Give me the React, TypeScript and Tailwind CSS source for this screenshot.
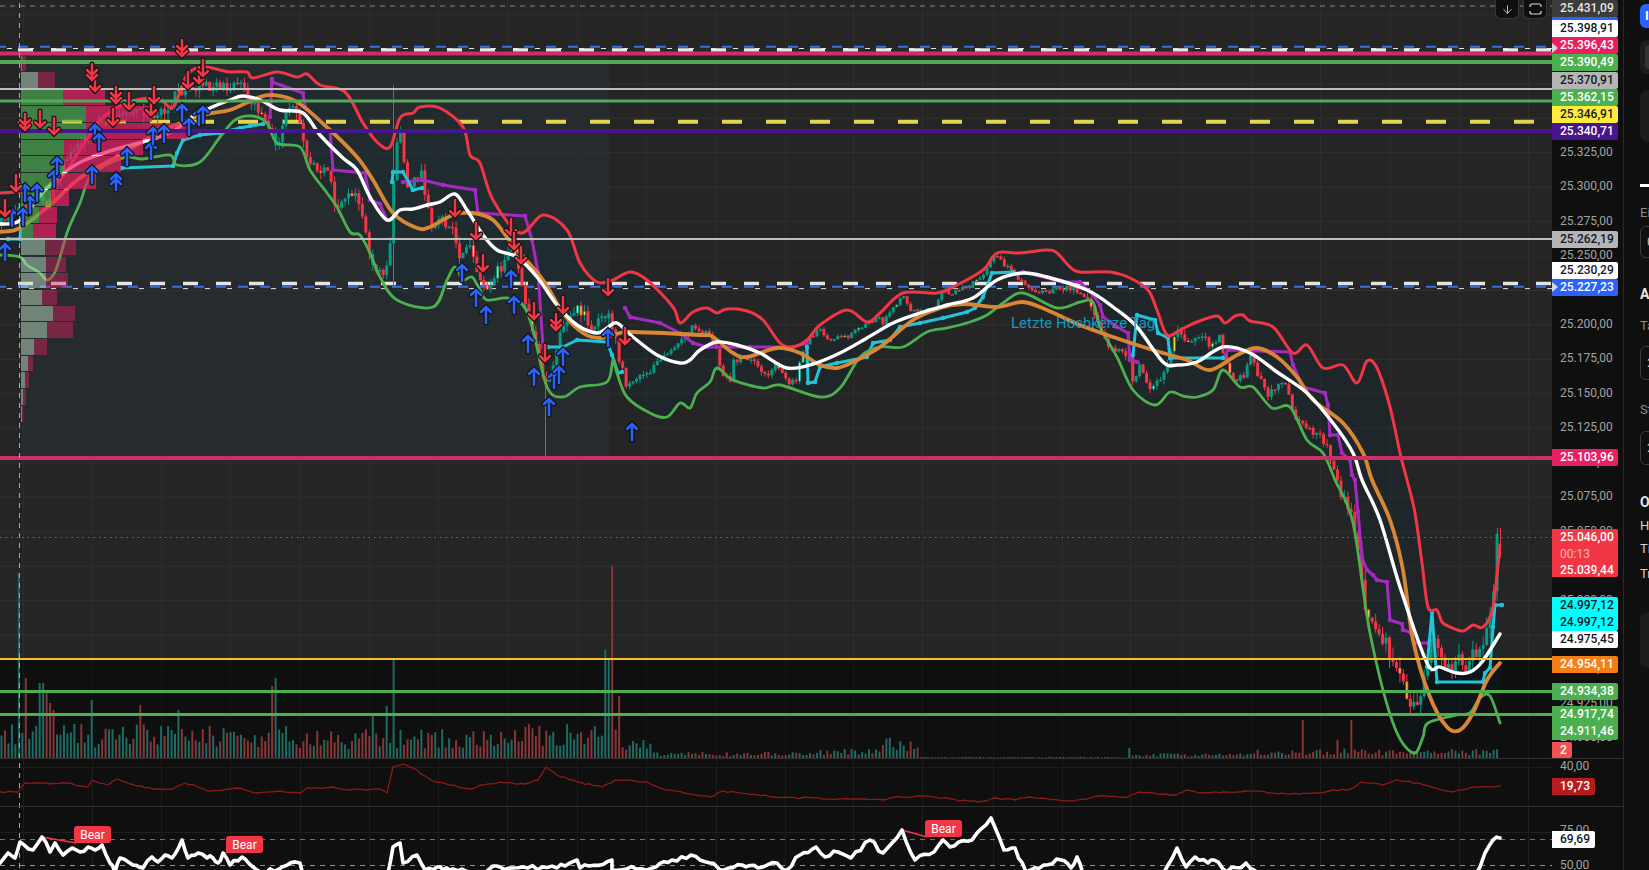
import React from "react";
import { ArrowDown } from "lucide-react";

const W = 1552;
const parse = (s: string) => s.trim().split(/\s+/).map((p) => p.split(",").map(Number) as [number, number]);

const white = "0,224 15,223 25,215 45,190 65,172 85,160 120,148 150,140 175,130 190,118 210,108 230,100 243,96 260,100 280,110 303,113 320,135 343,158 357,170 370,197 387,220 400,210 413,209 427,205 440,202 455,194 467,210 483,235 497,250 517,257 537,277 557,305 577,325 597,333 607,328 617,323 633,337 657,355 680,363 690,360 700,350 717,342 737,345 760,353 787,368 813,364 840,353 867,338 893,323 920,313 947,305 973,298 997,280 1023,273 1047,277 1087,290 1113,307 1137,327 1163,362 1177,365 1197,362 1223,347 1250,353 1277,372 1307,393 1333,423 1353,453 1362,480 1380,520 1400,587 1427,663 1440,667 1457,673 1470,672 1482,662 1500,634";
const orange = "0,232 20,228 50,205 80,178 120,155 160,132 203,115 230,110 257,98 273,95 297,102 330,130 357,157 373,180 393,213 417,228 430,227 453,215 473,213 493,220 513,245 543,280 563,313 583,333 600,338 620,333 633,332 700,335 713,337 733,353 747,357 777,348 800,353 820,365 837,368 853,362 880,347 913,320 940,308 963,304 997,307 1023,302 1047,310 1080,325 1113,337 1153,350 1187,360 1210,370 1237,355 1257,348 1277,357 1297,377 1313,400 1343,423 1363,453 1372,480 1390,520 1403,570 1413,640 1430,697 1447,727 1460,730 1473,713 1487,680 1500,663";
const red = "0,193 15,192 45,188 60,180 80,150 100,120 127,103 157,98 173,107 187,75 203,67 220,70 230,72 247,72 253,78 277,72 297,77 307,74 320,85 345,92 363,123 377,142 390,147 400,118 413,113 420,107 440,108 463,127 470,155 480,163 493,200 520,233 543,215 567,230 580,263 597,282 613,280 630,272 647,280 673,307 680,323 693,312 707,308 717,313 727,309 747,311 763,320 780,343 793,347 807,340 820,325 847,310 867,322 880,313 903,293 937,293 957,285 983,270 997,253 1020,253 1047,250 1057,253 1070,267 1080,272 1110,272 1130,278 1148,290 1157,310 1167,335 1180,330 1197,322 1217,316 1225,323 1235,316 1243,315 1250,321 1273,327 1293,353 1307,345 1323,368 1343,365 1357,383 1367,361 1377,368 1390,407 1400,453 1407,480 1415,513 1422,563 1428,607 1437,610 1442,622 1450,627 1463,631 1473,625 1483,627 1493,607 1500,545";
const green = "0,255 20,257 27,265 40,273 47,280 55,272 62,250 68,230 80,203 90,177 110,163 127,157 143,159 170,155 177,165 200,162 220,137 235,120 252,116 267,123 277,143 300,147 310,170 327,193 337,207 350,232 360,235 370,253 380,277 397,300 433,307 447,280 455,267 463,280 472,277 480,290 487,300 507,298 523,305 533,330 547,387 563,397 580,387 607,382 613,360 617,373 627,397 650,413 667,417 680,403 690,408 697,393 710,382 717,368 733,380 763,388 780,385 820,397 840,388 860,357 880,347 903,347 927,332 947,328 970,322 987,315 1003,303 1023,293 1057,308 1080,302 1093,302 1100,327 1117,357 1133,390 1155,405 1170,392 1183,396 1197,397 1213,390 1223,370 1240,387 1253,387 1272,408 1290,407 1307,440 1323,453 1335,480 1353,523 1370,633 1393,723 1413,753 1423,737 1428,723 1457,715 1470,713 1480,698 1490,696 1500,723";
const purple = [
  "272,79 270,117 272,82 303,93 305,107 330,130 333,170 365,173 370,200 380,204 387,220",
  "403,182 423,180 443,185 475,190 478,213 525,216 532,240 538,272 543,347",
  "625,308 630,317 660,323 680,333 693,343 707,347 750,347 793,347 807,343",
  "1023,272 1063,282 1080,282 1093,295 1100,305 1103,317 1117,327 1128,333 1130,360 1137,362",
  "1223,358 1228,350 1290,352 1293,365 1303,387 1325,393 1328,405 1330,435 1338,435 1342,453 1350,460 1352,475 1355,480 1358,512 1362,558 1367,570 1373,575 1377,580 1387,582 1390,620 1402,624 1403,630 1410,632 1415,643 1428,643",
];
const cyan = [
  "8,239 20,239 21,225",
  "122,168 173,166 177,153 183,140 200,135 220,133 240,128 250,126 263,124",
  "392,182 393,172 403,172 413,190 422,188",
  "548,347 563,347 577,340 607,342 612,355 618,373 622,372",
  "807,347 808,383 815,382 820,367 837,363 867,357 873,343 890,340 900,327 920,323 943,318 967,312 975,308 983,297 992,273 1013,272",
  "1133,355 1137,315 1155,320 1158,333 1168,338 1170,358 1203,358 1223,358",
  "1427,667 1432,612 1437,682 1483,682 1485,673 1490,668 1493,627 1495,605 1502,605",
];
const pricePath = parse("0,225 15,215 30,195 47,200 70,150 100,125 130,110 160,115 180,90 200,85 220,88 242,83 250,97 263,113 275,143 280,140 283,120 293,110 303,133 308,160 317,173 327,170 332,187 335,207 347,193 358,198 363,213 368,247 373,263 385,275 390,250 393,185 397,143 402,123 403,150 407,190 412,183 422,167 425,197 432,227 437,220 445,223 455,233 460,257 470,247 477,267 483,290 493,277 503,263 513,250 520,277 530,320 537,343 543,377 548,390 557,350 563,323 577,310 582,310 593,327 608,310 613,330 627,390 633,380 640,373 650,377 657,360 670,350 680,340 693,327 707,333 715,347 723,377 730,380 733,363 742,357 747,358 757,365 767,375 777,363 783,377 790,387 797,377 802,353 810,338 820,330 827,340 840,337 847,337 863,327 877,317 883,323 890,313 903,293 910,310 920,310 937,307 940,293 957,292 970,285 983,275 995,253 1002,263 1013,272 1023,283 1033,290 1050,292 1063,287 1080,290 1085,297 1095,317 1103,340 1113,350 1130,357 1132,383 1140,367 1147,387 1153,387 1160,377 1167,363 1178,330 1187,343 1200,333 1212,347 1220,338 1228,370 1235,387 1245,372 1250,353 1258,377 1268,393 1277,387 1283,378 1290,397 1295,418 1307,430 1318,433 1327,445 1332,467 1342,497 1357,530 1363,597 1373,623 1385,640 1392,657 1400,667 1407,697 1417,700 1425,680 1432,640 1440,660 1447,663 1460,662 1467,667 1477,647 1483,637 1492,607 1497,543 1500,540");

const redVol = "0,792 18,792 25,783 43,783 48,784 67,783 80,786 88,787 92,780 107,785 117,779 137,786 157,789 173,789 185,783 200,788 210,791 237,788 257,793 280,791 300,793 307,788 333,787 350,790 380,789 387,793 393,767 403,764 413,768 433,781 450,785 470,789 480,785 500,782 525,784 538,780 546,767 557,775 577,782 602,787 615,780 647,782 666,790 710,797 723,791 774,797 838,799 883,800 895,797 921,796 978,802 997,798 1016,800 1029,797 1074,801 1099,796 1128,797 1138,792 1176,795 1186,790 1201,793 1246,791 1291,794 1316,793 1329,791 1351,789 1361,782 1383,785 1396,780 1418,783 1453,792 1476,787 1500,786";
const rsi = "0,863 8,853 15,858 20,842 33,850 42,837 50,852 55,843 63,855 72,848 80,852 88,847 95,850 102,845 110,863 115,872 120,858 133,865 143,868 152,857 158,862 165,855 172,858 182,840 188,858 198,853 207,858 213,858 218,863 223,853 230,865 242,857 253,867 262,873 282,867 300,863 303,875 385,875 388,873 393,847 400,843 403,863 417,855 425,870 437,867 443,870 453,869 480,875 493,866 500,867 513,868 557,868 577,860 580,868 612,860 612,870 656,867 672,860 691,855 710,863 720,870 742,865 758,868 777,863 787,870 800,855 816,847 825,857 838,852 851,858 870,840 883,853 902,830 915,860 934,852 943,840 950,847 972,840 991,818 1004,850 1015,848 1026,872 1061,860 1071,868 1077,857 1083,874 1163,874 1177,848 1186,867 1195,857 1208,863 1214,860 1227,872 1246,863 1259,874 1476,874 1480,867 1485,853 1493,840 1500,838";

const yk = (k: number) => 152.7 + 34.45 * k;
const fmt = (v: number) => `${Math.floor(v / 1000)}.${String(v % 1000).padStart(3, "0")},00`;
const ticks = Array.from({ length: 18 }, (_, k) => ({ y: yk(k), t: fmt(25325 - 25 * k) }));
const gridX = [23, 92, 161, 230, 300, 369, 438, 507, 577, 646, 716, 785, 853, 922, 993, 1062, 1130, 1182, 1251, 1320, 1390, 1459, 1528];
const gridY = Array.from({ length: 22 }, (_, k) => yk(k - 4));

function mulberry(a: number) {
  return () => {
    a |= 0; a = (a + 0x6d2b79f5) | 0;
    let t = Math.imul(a ^ (a >>> 15), 1 | a);
    t = (t + Math.imul(t ^ (t >>> 7), 61 | t)) ^ t;
    return ((t ^ (t >>> 14)) >>> 0) / 4294967296;
  };
}
const P = (x: number) => {
  for (let i = 1; i < pricePath.length; i++) {
    if (x <= pricePath[i][0]) {
      const [a, b] = pricePath[i - 1];
      const [c, d] = pricePath[i];
      return b + ((d - b) * (x - a)) / Math.max(c - a, 0.01);
    }
  }
  return pricePath[pricePath.length - 1][1];
};
const smooth = (s: string) => {
  const p = parse(s);
  let d = `M${p[0][0]} ${p[0][1]}`;
  for (let i = 0; i < p.length - 1; i++) {
    const a = p[Math.max(i - 1, 0)], b = p[i], c = p[i + 1], e = p[Math.min(i + 2, p.length - 1)];
    d += `C${(b[0] + (c[0] - a[0]) / 6).toFixed(1)} ${(b[1] + (c[1] - a[1]) / 6).toFixed(1)} ${(c[0] - (e[0] - b[0]) / 6).toFixed(1)} ${(c[1] - (e[1] - b[1]) / 6).toFixed(1)} ${c[0]} ${c[1]}`;
  }
  return d;
};
const jitter = (s: string, amt: number, seed: number) => {
  const r = mulberry(seed);
  const p = parse(s);
  const out: string[] = [];
  for (let i = 0; i < p.length - 1; i++) {
    out.push(p[i].join(","));
    const dist = p[i + 1][0] - p[i][0];
    const n = Math.floor(dist / 5);
    for (let k = 1; k <= n; k++) {
      const t = k / (n + 1);
      out.push(`${p[i][0] + dist * t},${p[i][1] + (p[i + 1][1] - p[i][1]) * t + (r() - 0.5) * amt}`);
    }
  }
  out.push(p[p.length - 1].join(","));
  return out.join(" ");
};

const amp = (x: number) => (x < 620 ? 12 : x < 800 ? 7 : x < 1060 ? 4.5 : x < 1340 ? 8 : 18);
const volEnv = (x: number) =>
  x < 300 ? 22 : x < 500 ? 19 : x < 620 ? 22 : x < 653 ? 14 : x < 820 ? 4 : x < 880 ? 6 : x < 921 ? 13 : x < 1128 ? 0.8 : x < 1252 ? 3 : 6;

const rng = mulberry(7);
type C = { x: number; o: number; c: number; h: number; l: number; hi: boolean; v: number };
const candles: C[] = [];
let prev = P(0);
for (let i = 0; i < 432; i++) {
  const x = 1.5 + i * 3.47;
  const a = amp(x);
  const c = P(x) + (rng() - 0.5) * a;
  const o = prev;
  prev = c;
  candles.push({
    x, o, c,
    h: Math.min(o, c) - rng() * a * 0.6,
    l: Math.max(o, c) + rng() * a * 0.6,
    hi: rng() < 0.06,
    v: volEnv(x) * (0.45 + rng() * 1.1),
  });
}
const spikes: [number, number, boolean][] = [
  [20, 185, true], [25, 80, false], [40, 75, true], [43, 75, true], [47, 65, false], [50, 55, false], [54, 48, false],
  [92, 58, true], [139, 53, false], [178, 48, true], [272, 72, false], [276, 80, true], [373, 45, true], [388, 52, true],
  [393, 98, true], [372, 45, true], [140, 53, false], [607, 108, true], [610, 100, true], [613, 192, false], [620, 62, false],
  [1128, 10, true], [1303, 38, false], [1350, 38, false], [1336, 18, false],
];
for (const [sx, h, up] of spikes) {
  const i = Math.round((sx - 1.5) / 3.47);
  candles[i].v = h;
  const m = Math.min(candles[i].o, candles[i].c);
  const n = Math.max(candles[i].o, candles[i].c);
  candles[i].o = up ? n : m;
  candles[i].c = up ? m : n;
}

const profile: [number, number, number, number, boolean][] = [
  [56, 15, 22, 26, false], [72, 17, 38, 55, false], [90, 15, 63, 105, true], [106, 16, 86, 152, true], [123, 16, 86, 187, true],
  [140, 15, 64, 143, true], [156, 16, 63, 121, true], [173, 16, 52, 96, true], [190, 16, 51, 69, true], [207, 16, 39, 57, true],
  [224, 15, 33, 56, true], [240, 15, 45, 76, false], [257, 15, 46, 66, false], [273, 15, 46, 68, false], [290, 15, 42, 57, false],
  [306, 15, 53, 75, false], [322, 16, 47, 73, false], [339, 16, 34, 47, false], [356, 15, 28, 33, false], [372, 16, 25, 29, false],
  [389, 16, 23, 26, false], [406, 16, 22, 23, false],
];

const up: [number, number][] = [[5, 252], [12, 218], [23, 217], [30, 205], [25, 193], [37, 193], [54, 179], [57, 166], [92, 175], [127, 157], [151, 151], [95, 133], [99, 142], [153, 136], [164, 134], [182, 113], [189, 127], [199, 117], [203, 115], [462, 273], [476, 298], [486, 315], [511, 279], [514, 305], [528, 344], [534, 377], [549, 407], [554, 380], [559, 375], [563, 357], [608, 338], [632, 432]];
const upD: [number, number][] = [[116, 182]];
const down: [number, number][] = [[5, 208], [16, 183], [40, 119], [54, 126], [95, 83], [129, 101], [113, 117], [151, 107], [154, 95], [188, 80], [199, 75], [203, 68], [455, 208], [476, 231], [483, 263], [511, 227], [514, 241], [521, 255], [534, 311], [563, 305], [545, 353], [608, 287], [625, 336]];
const downD: [number, number][] = [[25, 122], [92, 72], [116, 95], [182, 48], [556, 322]];

function Arrow({ x, y, dir, dbl }: { x: number; y: number; dir: 1 | -1; dbl?: boolean }) {
  const col = dir === 1 ? "#2962ff" : "#f23645";
  const tip = y - dir * 8;
  const tail = y + dir * 8;
  const d = `M${x} ${tail}V${tip}M${x - 5} ${tip + dir * 5}L${x} ${tip}L${x + 5} ${tip + dir * 5}`;
  const d2 = dbl ? `M${x - 5} ${tip + dir * 10}L${x} ${tip + dir * 5}L${x + 5} ${tip + dir * 10}` : "";
  return (
    <g fill="none" strokeLinecap="round" strokeLinejoin="miter">
      <path d={d + d2} stroke="#141414" strokeWidth={5} />
      <path d={d + d2} stroke={col} strokeWidth={2.5} />
    </g>
  );
}

function Line({ s, c, w, o = 1 }: { s: string; c: string; w: number; o?: number }) {
  return <polyline points={s} fill="none" stroke={c} strokeWidth={w} strokeLinejoin="round" strokeLinecap="round" opacity={o} />;
}
function Curve({ s, c, w }: { s: string; c: string; w: number }) {
  return <path d={smooth(s)} fill="none" stroke={c} strokeWidth={w} strokeLinecap="round" strokeLinejoin="round" />;
}
function Dots({ s, c, r }: { s: string; c: string; r: number }) {
  return <>{parse(s).map(([x, y], i) => <circle key={i} cx={x} cy={y} r={r} fill={c} />)}</>;
}
function GridV({ c }: { c: string }) {
  return <>{gridX.map((x) => <line key={x} x1={x + 0.5} x2={x + 0.5} y1={0} y2={870} stroke={c} />)}</>;
}
const Cross = () => <line x1={19.5} x2={19.5} y1={3} y2={870} stroke="#a8a8a8" strokeDasharray="5 5" />;

function MainChart() {
  const bandPts = [...parse(red), ...parse(green).reverse()].map((p) => p.join(",")).join(" ");
  return (
    <svg width={W} height={758} viewBox={`0 0 ${W} 758`} className="block">
      <rect width={W} height={659} fill="#252525" />
      <rect y={659} width={W} height={99} fill="#0f0f0f" />
      <rect x={20} y={57} width={589} height={401} fill="rgba(60,110,130,0.09)" />
      {gridY.map((y) => <line key={y} x1={0} x2={W} y1={y} y2={y} stroke={y < 659 ? "#303030" : "#1e1e1e"} />)}
      <GridV c="#2d2d2d" />
      <rect y={659} width={W} height={99} fill="#0f0f0f" opacity={0.72} />
      <polygon points={bandPts} fill="rgba(15,45,60,0.22)" />
      {candles.map((c) => (
        <rect key={c.x} x={c.x - 1} y={758 - c.v} width={2} height={c.v} fill={c.c < c.o ? "#1d6b63" : "#863636"} />
      ))}
      {[
        [18, 50, 3.5, "#e4e4e4", "15 18"], [-4, 46.8, 2, "#3d6fe0", "10 12"], [7, 48.5, 1, "#e4e4e4", "5 17"],
        [18, 283.4, 3.5, "#e4e4e4", "15 18"], [-4, 286.8, 2, "#3d6fe0", "10 12"], [7, 288.6, 1, "#e4e4e4", "5 17"],
      ].map(([x, y, w, c, d], i) => (
        <line key={i} x1={x as number} x2={W} y1={y as number} y2={y as number} stroke={c as string} strokeWidth={w as number} strokeDasharray={d as string} />
      ))}
      <line x1={18} x2={W} y1={121.7} y2={121.7} stroke="#e4d64c" strokeWidth={4} strokeDasharray="20 24" />
      <line x1={0} x2={W} y1={6} y2={6} stroke="#8a8a8a" strokeDasharray="5 5" />
      {candles.map((c) => {
        const g = c.c < c.o;
        const col = g ? "#089981" : "#f23645";
        const top = Math.min(c.o, c.c);
        const h = Math.max(1.5, Math.abs(c.o - c.c));
        return (
          <g key={c.x}>
            <rect x={c.x - 0.5} y={c.h} width={1} height={c.l - c.h} fill={col} />
            <rect x={c.x - 1.5} y={top} width={3} height={h} fill={col} />
            {c.hi && <rect x={c.x - 0.5} y={top + 0.5} width={1} height={Math.max(h - 1, 1)} fill="#ffeb3b" />}
          </g>
        );
      })}
      <rect x={393} y={85} width={1} height={200} fill="#089981" />
      <rect x={545} y={380} width={1} height={76} fill="#f23645" />
      <rect x={1497} y={528} width={1} height={30} fill="#089981" />
      <rect x={1500} y={528} width={1} height={30} fill="#f23645" />
      {purple.map((s) => <g key={s}><Line s={s} c="#a52ac0" w={3} /><Dots s={s} c="#a52ac0" r={2.3} /></g>)}
      {cyan.map((s) => <g key={s}><Line s={s} c="#22c4d6" w={3} /><Dots s={s} c="#22c4d6" r={2.2} /></g>)}
      <Curve s={red} c="#f23645" w={3} />
      <Curve s={green} c="#4caf50" w={2.8} />
      <Curve s={orange} c="#d98635" w={3.8} />
      <Curve s={white} c="#ffffff" w={3.4} />
      {profile.map(([y, h, g, p, va]) => (
        <g key={y}>
          <rect x={21} y={y} width={g - 21} height={h} fill={va ? "rgba(76,175,80,0.66)" : "rgba(190,222,194,0.5)"} />
          <rect x={g} y={y} width={p - g} height={h} fill={va ? "rgba(233,30,99,0.7)" : "rgba(233,30,99,0.42)"} />
        </g>
      ))}
      <rect y={51.5} width={W} height={4} fill="#cc2f68" />
      <rect y={60} width={W} height={4} fill="#55a858" />
      <rect y={88} width={W} height={2} fill="#bdbdbd" />
      <rect y={99.5} width={W} height={3} fill="#55a858" />
      <rect y={129} width={W} height={4} fill="#4a148c" />
      <rect y={238} width={W} height={2} fill="#bdbdbd" />
      <rect y={456} width={W} height={4} fill="#cc2f68" />
      <line x1={0} x2={W} y1={537.5} y2={537.5} stroke="#f23645" strokeDasharray="1.5 4" />
      <rect y={658} width={W} height={2} fill="#f9bf2f" />
      <rect y={690} width={W} height={3} fill="#4caf50" />
      <rect y={713} width={W} height={3} fill="#4caf50" />
      <Cross />
      {up.map(([x, y]) => <Arrow key={`${x}-${y}`} x={x} y={y} dir={1} />)}
      {upD.map(([x, y]) => <Arrow key={`${x}-${y}`} x={x} y={y} dir={1} dbl />)}
      {down.map(([x, y]) => <Arrow key={`${x}-${y}`} x={x} y={y} dir={-1} />)}
      {downD.map(([x, y]) => <Arrow key={`${x}-${y}`} x={x} y={y} dir={-1} dbl />)}
    </svg>
  );
}

function VolPane() {
  return (
    <svg width={W} height={47} viewBox={`0 759 ${W} 47`} className="block">
      <line x1={0} x2={W} y1={767.5} y2={767.5} stroke="#1f1f1f" />
      <GridV c="#1c1c1c" />
      <Cross />
      <Line s={jitter(redVol, 1.6, 3)} c="#8b1a1a" w={1.3} />
    </svg>
  );
}

function RsiPane() {
  return (
    <svg width={W} height={63} viewBox={`0 807 ${W} 63`} className="block">
      <line x1={0} x2={W} y1={832.5} y2={832.5} stroke="#1f1f1f" />
      <GridV c="#1c1c1c" />
      <Cross />
      <line x1={0} x2={W} y1={839.5} y2={839.5} stroke="#f23645" strokeDasharray="5 5" />
      <line x1={0} x2={W} y1={865.5} y2={865.5} stroke="#8f8f8f" strokeDasharray="5 5" />
      <line x1={42} y1={837} x2={76} y2={843} stroke="#f23645" strokeWidth={1.5} />
      <line x1={222} y1={854} x2={228} y2={852} stroke="#f23645" strokeWidth={1.5} />
      <line x1={902} y1={830} x2={927} y2={837} stroke="#f23645" strokeWidth={1.5} />
      <Line s={jitter(rsi, 5, 11)} c="#ffffff" w={3.6} />
    </svg>
  );
}

const Tag = ({ y, h = 17, w = 66, bg, fg, rows }: { y: number; h?: number; w?: number; bg: string; fg: string; rows: string[] }) => (
  <div
    className="absolute left-0 flex flex-col rounded-r-[2px] pl-[8px] text-[12px] font-medium leading-[16.5px]"
    style={{ top: y, height: h, width: w, background: bg, color: fg }}
  >
    {rows.map((r, i) => (
      <span key={i} className={r.includes(":") ? "opacity-60 font-normal" : ""}>{r}</span>
    ))}
  </div>
);

const Chevron = ({ y }: { y: number }) => (
  <svg width={7} height={10} viewBox="0 0 7 10" className="absolute left-0" style={{ top: y }}>
    <path d="M0 0L6 5L0 10Z" fill="#d8d8d8" />
  </svg>
);

const axisTags: { y: number; h?: number; w?: number; bg: string; fg: string; rows: string[] }[] = [
  { y: 17, bg: "#2962ff", fg: "#fff", rows: [""] },
  { y: 0, bg: "#3c3c3c", fg: "#e6e6e6", rows: ["25.431,09"] },
  { y: 20, bg: "#ffffff", fg: "#131722", rows: ["25.398,91"] },
  { y: 37, bg: "#e91e63", fg: "#fff", rows: ["25.396,43"] },
  { y: 54, bg: "#4caf50", fg: "#fff", rows: ["25.390,49"] },
  { y: 72, bg: "#b5b5b5", fg: "#131722", rows: ["25.370,91"] },
  { y: 89, bg: "#4caf50", fg: "#fff", rows: ["25.362,15"] },
  { y: 106, bg: "#ffeb3b", fg: "#131722", rows: ["25.346,91"] },
  { y: 123, bg: "#4a148c", fg: "#fff", rows: ["25.340,71"] },
  { y: 231, bg: "#b5b5b5", fg: "#131722", rows: ["25.262,19"] },
  { y: 262, bg: "#ffffff", fg: "#131722", rows: ["25.230,29"] },
  { y: 279, bg: "#2962ff", fg: "#fff", rows: ["25.227,23"] },
  { y: 449, bg: "#e91e63", fg: "#fff", rows: ["25.103,96"] },
  { y: 529, h: 48, bg: "#f23645", fg: "#fff", rows: ["25.046,00", "00:13", "25.039,44"] },
  { y: 597, h: 34, bg: "#00ffff", fg: "#131722", rows: ["24.997,12", "24.997,12"] },
  { y: 631, bg: "#ffffff", fg: "#131722", rows: ["24.975,45"] },
  { y: 656, bg: "#f57f17", fg: "#fff", rows: ["24.954,11"] },
  { y: 683, bg: "#4caf50", fg: "#fff", rows: ["24.934,38"] },
  { y: 706, h: 34, bg: "#4caf50", fg: "#fff", rows: ["24.917,74", "24.911,46"] },
  { y: 742, h: 16, w: 20, bg: "#ef5350", fg: "#fff", rows: ["2"] },
];

function MainAxis() {
  return (
    <div className="relative h-full w-[71px] overflow-hidden bg-[#0f0f0f]">
      {ticks.map((t) => (
        <span key={t.t} className="absolute left-[8px] text-[12px] leading-[17px] text-[#a3a3a3]" style={{ top: t.y - 9 }}>{t.t}</span>
      ))}
      {axisTags.map((t) => <Tag key={t.y} {...t} />)}
      <Chevron y={43} />
      <Chevron y={282} />
    </div>
  );
}

const Input = ({ t, tall }: { t: string; tall?: boolean }) => (
  <div className={`flex w-[200px] items-center rounded-md border border-[#3a3a3a] pl-[6px] text-[13px] text-[#bdbdbd] ${tall ? "h-[34px]" : "h-[32px]"}`}>{t}</div>
);

const Muted = ({ t }: { t: string }) => <div className="text-[13px] leading-[17px] text-[#8a8a8a]">{t}</div>;
const Body = ({ t }: { t: string }) => <div className="text-[13px] leading-[17px] text-[#d0d0d0]">{t}</div>;
const Head = ({ t }: { t: string }) => <div className="text-[14px] font-bold leading-[18px] text-[#e6e6e6]">{t}</div>;

function SidePanel() {
  return (
    <div className="flex h-[870px] w-[26px] shrink-0 flex-col overflow-hidden border-l border-[#2a2a2a] bg-[#0f0f0f] pl-[16px] pt-[4px]">
      <div className="flex h-[24px] w-[200px] shrink-0 items-center rounded-md bg-[#2962ff] pl-[5px] text-[13px] font-bold text-white">I</div>
      <div className="mt-[12px] h-[34px] w-[200px] shrink-0 rounded-md bg-[#1c1c1c] p-[5px]">
        <div className="h-full rounded-sm bg-[#333333]" />
      </div>
      <div className="mt-[16px] h-[52px] w-[200px] shrink-0 rounded-lg bg-[#1c1c1c]" />
      <div className="mt-[42px] h-[3px] w-[200px] shrink-0 bg-white" />
      <div className="mt-[17px] flex flex-col gap-[5px]"><Muted t="Ei" /><Input t="0" /></div>
      <div className="mt-[27px]"><Head t="A" /></div>
      <div className="mt-[14px] flex flex-col gap-[12px]"><Muted t="Ta" /><Input t="2" tall /></div>
      <div className="mt-[21px] flex flex-col gap-[13px]"><Muted t="St" /><Input t="2" tall /></div>
      <div className="mt-[28px]"><Head t="O" /></div>
      <div className="mt-[6px] flex flex-col gap-[6px]"><Body t="H" /><Body t="Ti" /></div>
      <div className="mt-[8px]"><Body t="Tr" /></div>
      <div className="mt-[30px] h-[56px] w-[200px] shrink-0 rounded-lg bg-[#1c1c1c]" />
    </div>
  );
}

const Bear = ({ cls }: { cls: string }) => (
  <div className={`absolute flex h-[17px] w-[37px] items-center justify-center rounded-[3px] bg-[#f23645] text-[12px] text-white ${cls}`}>Bear</div>
);

const ToolBtn = ({ children }: { children: React.ReactNode }) => (
  <div className="flex h-[19px] w-[24px] items-center justify-center rounded-b-md border border-t-0 border-[#363636] bg-[#0f0f0f] text-[#d8d8d8]">{children}</div>
);

export default function App() {
  return (
    <div className="flex h-[870px] w-[1649px] overflow-hidden bg-[#0f0f0f] font-['Roboto',sans-serif]">
      <div className="flex w-[1623px] shrink-0 flex-col">
        <div className="flex h-[758px]">
          <div className="relative w-[1552px]">
            <MainChart />
            <div className="absolute left-[1011px] top-[314px] text-[15px] leading-[18px] text-[#0a9cc4]">Letzte Hochkerze Tag</div>
            <div className="absolute left-[1495px] top-0 flex gap-[4px]">
              <ToolBtn><ArrowDown size={13} strokeWidth={1.6} /></ToolBtn>
              <ToolBtn>
                <svg width="13" height="12" viewBox="0 0 13 12" fill="none" stroke="#d8d8d8" strokeWidth="1.2">
                  <path d="M1 4V3a2 2 0 0 1 2-2h7a2 2 0 0 1 2 2v1M1 8v1a2 2 0 0 0 2 2h7a2 2 0 0 0 2-2V8" />
                </svg>
              </ToolBtn>
            </div>
          </div>
          <MainAxis />
        </div>
        <div className="flex h-[48px] border-t border-[#2f2f2f]">
          <div className="w-[1552px]"><VolPane /></div>
          <div className="flex w-[71px] flex-col">
            <span className="-mt-[1px] pl-[8px] text-[12px] leading-[17px] text-[#a3a3a3]">40,00</span>
            <div className="mt-[3px] h-[17px] w-[43px] rounded-r-[2px] bg-[#b71c1c] pl-[8px] text-[12px] font-medium leading-[17px] text-white">19,73</div>
          </div>
        </div>
        <div className="flex h-[64px] border-t border-[#2f2f2f]">
          <div className="relative w-[1552px]">
            <RsiPane />
            <Bear cls="left-[74px] top-[19px]" />
            <Bear cls="left-[226px] top-[29px]" />
            <Bear cls="left-[925px] top-[13px]" />
          </div>
          <div className="relative w-[71px]">
            <span className="absolute left-[8px] top-[15px] text-[12px] leading-[17px] text-[#a3a3a3]">75,00</span>
            <div className="absolute left-0 top-[24px] h-[17px] w-[43px] rounded-r-[2px] bg-white pl-[8px] text-[12px] font-medium leading-[17px] text-[#131722]">69,69</div>
            <span className="absolute left-[8px] top-[50px] text-[12px] leading-[17px] text-[#a3a3a3]">50,00</span>
          </div>
        </div>
      </div>
      <SidePanel />
    </div>
  );
}
